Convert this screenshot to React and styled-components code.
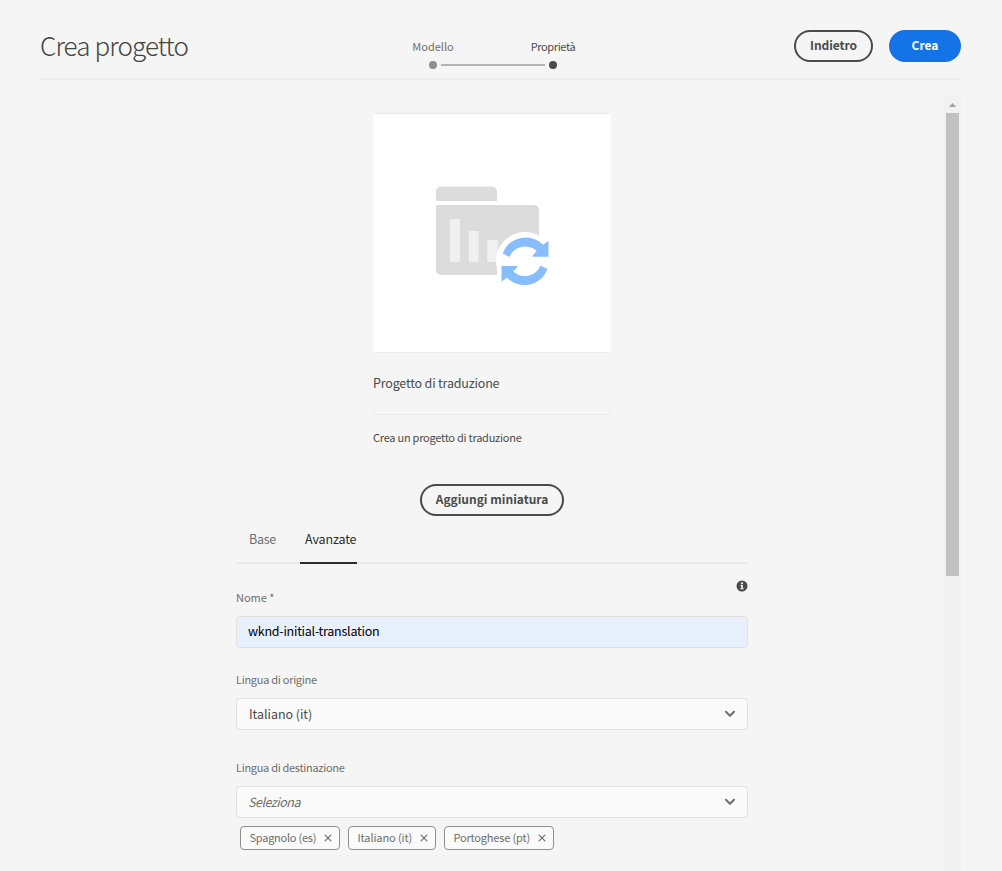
import React from "react";
import styled, { createGlobalStyle } from "styled-components";

const GlobalStyle = createGlobalStyle`
  *, *::before, *::after { box-sizing: border-box; }
  body {
    margin: 0;
    background: #f5f5f5;
    color: #4b4b4b;
    font-family: "Noto Sans CJK SC", "Noto Sans", sans-serif;
    font-size: 13px;
    overflow: hidden;
  }
  button, input { font: inherit; }
`;

const Page = styled.div`
  height: 871px;
  padding: 0 41px 0 40px;
  display: flex;
  flex-direction: column;
  overflow: hidden;
`;

const Label = styled.span`
  display: block;
  white-space: pre;
  font-size: ${(p) => p.$size || 13}px;
  line-height: ${(p) => p.$line || 18}px;
  letter-spacing: ${(p) => p.$track || 0}px;
  font-weight: ${(p) => p.$weight || 400};
  font-style: ${(p) => (p.$italic ? "italic" : "normal")};
  margin-left: ${(p) => (p.$italic ? -1 : 0)}px;
  color: ${(p) => p.$color || "#4b4b4b"};
`;

const Header = styled.header`
  flex: none;
  height: 80px;
  border-bottom: 2px solid #eaeaea;
  display: grid;
  grid-template-columns: 333px 240px 1fr;
`;

const Title = styled.h1`
  margin: 0;
  padding-top: 27px;
  font-family: "Noto Sans CJK SC Light", "Noto Sans CJK SC", sans-serif;
  font-size: 26px;
  line-height: 36px;
  font-weight: 300;
  letter-spacing: -0.88px;
  color: #444;
  white-space: nowrap;
`;

const Steps = styled.div`
  display: grid;
  grid-template-columns: 1fr 1fr;
  grid-template-rows: 24px 8px;
  justify-items: center;
  align-content: start;
  padding-top: 37px;
`;

const Track = styled.div`
  grid-column: 1 / -1;
  width: 128px;
  height: 8px;
  display: flex;
  align-items: center;
  justify-content: space-between;
`;

const Dot = styled.i`
  width: 8px;
  height: 8px;
  border-radius: 50%;
  background: ${(p) => (p.$active ? "#4b4b4b" : "#8e8e8e")};
`;

const Line = styled.i`
  width: 104px;
  height: 2px;
  background: #b3b3b3;
`;

const Actions = styled.div`
  display: flex;
  justify-content: flex-end;
  align-items: flex-start;
  gap: 16px;
  padding-top: 30px;
`;

const Button = styled.button`
  width: ${(p) => p.$width}px;
  height: 32px;
  padding: 0 0 2px;
  border-radius: 16px;
  border: 2px solid ${(p) => (p.$primary ? "#1473e6" : "#4b4b4b")};
  background: ${(p) => (p.$primary ? "#1473e6" : "transparent")};
  display: flex;
  align-items: center;
  justify-content: center;
`;

const Body = styled.div`
  flex: 1;
  min-height: 0;
  margin-top: 16px;
  display: flex;
`;

const Content = styled.main`
  flex: 1;
  display: flex;
  flex-direction: column;
  align-items: center;
  padding-top: 17px;
`;

const Scrollbar = styled.div`
  width: 17px;
  background: #f1f1f1;
  display: flex;
  flex-direction: column;
  align-items: center;
`;

const ScrollArrow = styled.div`
  flex: none;
  height: 17px;
  width: 17px;
  display: flex;
  svg { display: block; }
`;

const Thumb = styled.div`
  width: 13px;
  height: 463px;
  background: #c1c1c1;
`;

const Card = styled.section`
  width: 238px;
  height: 354px;
`;

const Thumbnail = styled.div`
  height: 240px;
  background: #fff;
  border-top: 1px solid #eaeaea;
  border-bottom: 1px solid #eaeaea;
  border-radius: 3px;
  svg { display: block; }
`;

const CardTitle = styled.div`
  height: 62px;
  padding-top: 21px;
  border-bottom: 1px solid #eaeaea;
`;

const CardText = styled.div`
  padding-top: 13px;
`;

const AddThumbnail = styled.div`
  padding-top: 17px;
`;

const Form = styled.div`
  width: 512px;
`;

const Tabs = styled.nav`
  height: 48px;
  display: flex;
  border-bottom: 2px solid #eaeaea;
`;

const Tab = styled.div`
  height: 48px;
  width: ${(p) => p.$width}px;
  margin-left: ${(p) => p.$gap}px;
  padding: 14px 0 0 ${(p) => p.$inset}px;
  border-bottom: ${(p) => (p.$active ? "2px solid #2c2c2c" : "0")};
`;

const InfoRow = styled.div`
  display: flex;
  justify-content: flex-end;
  height: 24px;
  padding-top: 16px;
  svg { display: block; flex: none; }
`;

const Field = styled.div`
  margin-bottom: ${(p) => p.$after}px;
`;

const FieldLabel = styled.label`
  display: block;
  height: 28px;
`;

const Control = styled.div`
  height: 32px;
  border: 1px solid #e1e1e1;
  border-radius: 4px;
  background: ${(p) => (p.$filled ? "#e8f0fe" : "#fafafa")};
  display: flex;
  align-items: center;
  justify-content: space-between;
  padding: ${(p) => (p.$filled ? "0 11px 2px" : "0 11px 0 12px")};
`;

const Chips = styled.div`
  display: flex;
  gap: 8px;
  padding: 8px 4px 0;
`;

const Chip = styled.div`
  width: ${(p) => p.$width}px;
  height: 24px;
  border: 1px solid #8e8e8e;
  border-radius: 4px;
  display: flex;
  align-items: flex-start;
  justify-content: space-between;
  padding: 1px 7px 0 8.500px;
  background: #fafafa;
  svg { margin-top: 6px; }
`;

const ProjectIcon = () => (
  <svg width="238" height="238" viewBox="373 114 238 238">
    <path d="M436 201v-9.500a5 5 0 0 1 5-5h51a5 5 0 0 1 5 5v9.500z" fill="#dcdcdc" />
    <path d="M436 205h98a5 5 0 0 1 5 5v65h-98a5 5 0 0 1-5-5z" fill="#dcdcdc" />
    <g fill="#f0f0f0">
      <rect x="450" y="219" width="10" height="43" rx="1.500" />
      <rect x="468.700" y="231" width="10" height="31" rx="1.500" />
      <rect x="487.200" y="240" width="11" height="22" rx="1.500" />
    </g>
    <circle cx="525" cy="261" r="29" fill="#fff" />
    <path d="M497 261h45v16h-45z" fill="#fff" />
    <g fill="#88bdfd">
      <path d="M502.700 253.500A24 23 0 0 1 543 244.800L548.500 241V256.700H532.500V255.800L536.700 251A16.500 15.500 0 0 0 509.500 257Z" />
      <path transform="rotate(180 525 261.300)" d="M502.700 253.500A24 23 0 0 1 543 244.800L548.500 241V256.700H532.500V255.800L536.700 251A16.500 15.500 0 0 0 509.500 257Z" />
    </g>
  </svg>
);

const Chevron = () => (
  <svg width="12" height="8" viewBox="0 0 12 8" fill="none">
    <path d="M2 1.800L6 5.700L10 1.800" stroke="#6e6e6e" strokeWidth="2" strokeLinecap="round" strokeLinejoin="round" />
  </svg>
);

const Cross = () => (
  <svg width="8" height="8" viewBox="0 0 8 8">
    <path d="M1.100 1.100L6.900 6.900M6.900 1.100L1.100 6.900" stroke="#6e6e6e" strokeWidth="1.200" strokeLinecap="round" />
  </svg>
);

const Info = () => (
  <svg width="12" height="12" viewBox="0 0 12 12">
    <circle cx="6" cy="6" r="5.500" fill="#4b4b4b" />
    <circle cx="6" cy="3.300" r="1.100" fill="#f5f5f5" />
    <path d="M4.500 5h2.300v3.200h.9v1.100H4.400V8.200h.8V6.100h-.7z" fill="#f5f5f5" />
  </svg>
);

const chips = [
  { text: "Spagnolo (es)", width: 100, track: -0.25 },
  { text: "Italiano (it)", width: 88, track: -0.12 },
  { text: "Portoghese (pt)", width: 110, track: -0.18 },
];

export default function App() {
  return (
    <Page>
      <GlobalStyle />
      <Header>
        <Title>Crea progetto</Title>
        <Steps>
          <Label $size={11} $color="#6e6e6e">Modello</Label>
          <Label $size={11} $track={-0.36}>Proprietà</Label>
          <Track>
            <Dot />
            <Line />
            <Dot $active />
          </Track>
        </Steps>
        <Actions>
          <Button $width={79}><Label $weight={700} $size={12} $track={-0.08}>Indietro</Label></Button>
          <Button $width={72} $primary><Label $weight={700} $size={12} $color="#fff">Crea</Label></Button>
        </Actions>
      </Header>
      <Body>
        <Content>
          <Card>
            <Thumbnail><ProjectIcon /></Thumbnail>
            <CardTitle><Label $size={12.5} $track={-0.18}>Progetto di traduzione</Label></CardTitle>
            <CardText><Label $size={11} $track={-0.25}>Crea un progetto di traduzione</Label></CardText>
          </Card>
          <AddThumbnail>
            <Button $width={144}><Label $weight={700} $size={12}>Aggiungi miniatura</Label></Button>
          </AddThumbnail>
          <Form>
            <Tabs>
              <Tab $width={52} $gap={0} $inset={13}><Label $size={12.5} $track={-0.3} $color="#6e6e6e">Base</Label></Tab>
              <Tab $width={57} $gap={12} $inset={5} $active><Label $size={12.5} $track={-0.12} $color="#2c2c2c">Avanzate</Label></Tab>
            </Tabs>
            <InfoRow><Info /></InfoRow>
            <Field $after={22}>
              <FieldLabel><Label $size={11} $color="#6e6e6e">Nome *</Label></FieldLabel>
              <Control $filled><Label $size={12.5} $track={-0.25} $color="#000">wknd-initial-translation</Label></Control>
            </Field>
            <Field $after={28}>
              <FieldLabel><Label $size={11} $track={-0.28} $color="#6e6e6e">Lingua di origine</Label></FieldLabel>
              <Control><Label $size={12.5} $track={-0.04}>Italiano (it)</Label><Chevron /></Control>
            </Field>
            <Field $after={0}>
              <FieldLabel><Label $size={11} $track={-0.3} $color="#6e6e6e">Lingua di destinazione</Label></FieldLabel>
              <Control><Label $size={12.5} $track={-0.5} $italic $color="#6e6e6e">Seleziona</Label><Chevron /></Control>
            </Field>
            <Chips>
              {chips.map((c) => (
                <Chip key={c.text} $width={c.width}>
                  <Label $size={11} $track={c.track} $color="#6e6e6e">{c.text}</Label>
                  <Cross />
                </Chip>
              ))}
            </Chips>
          </Form>
        </Content>
        <Scrollbar>
          <ScrollArrow>
            <svg width="17" height="17" viewBox="0 0 17 17"><path d="M5 11L8.500 7L12 11z" fill="#a3a3a3" /></svg>
          </ScrollArrow>
          <Thumb />
        </Scrollbar>
      </Body>
    </Page>
  );
}
